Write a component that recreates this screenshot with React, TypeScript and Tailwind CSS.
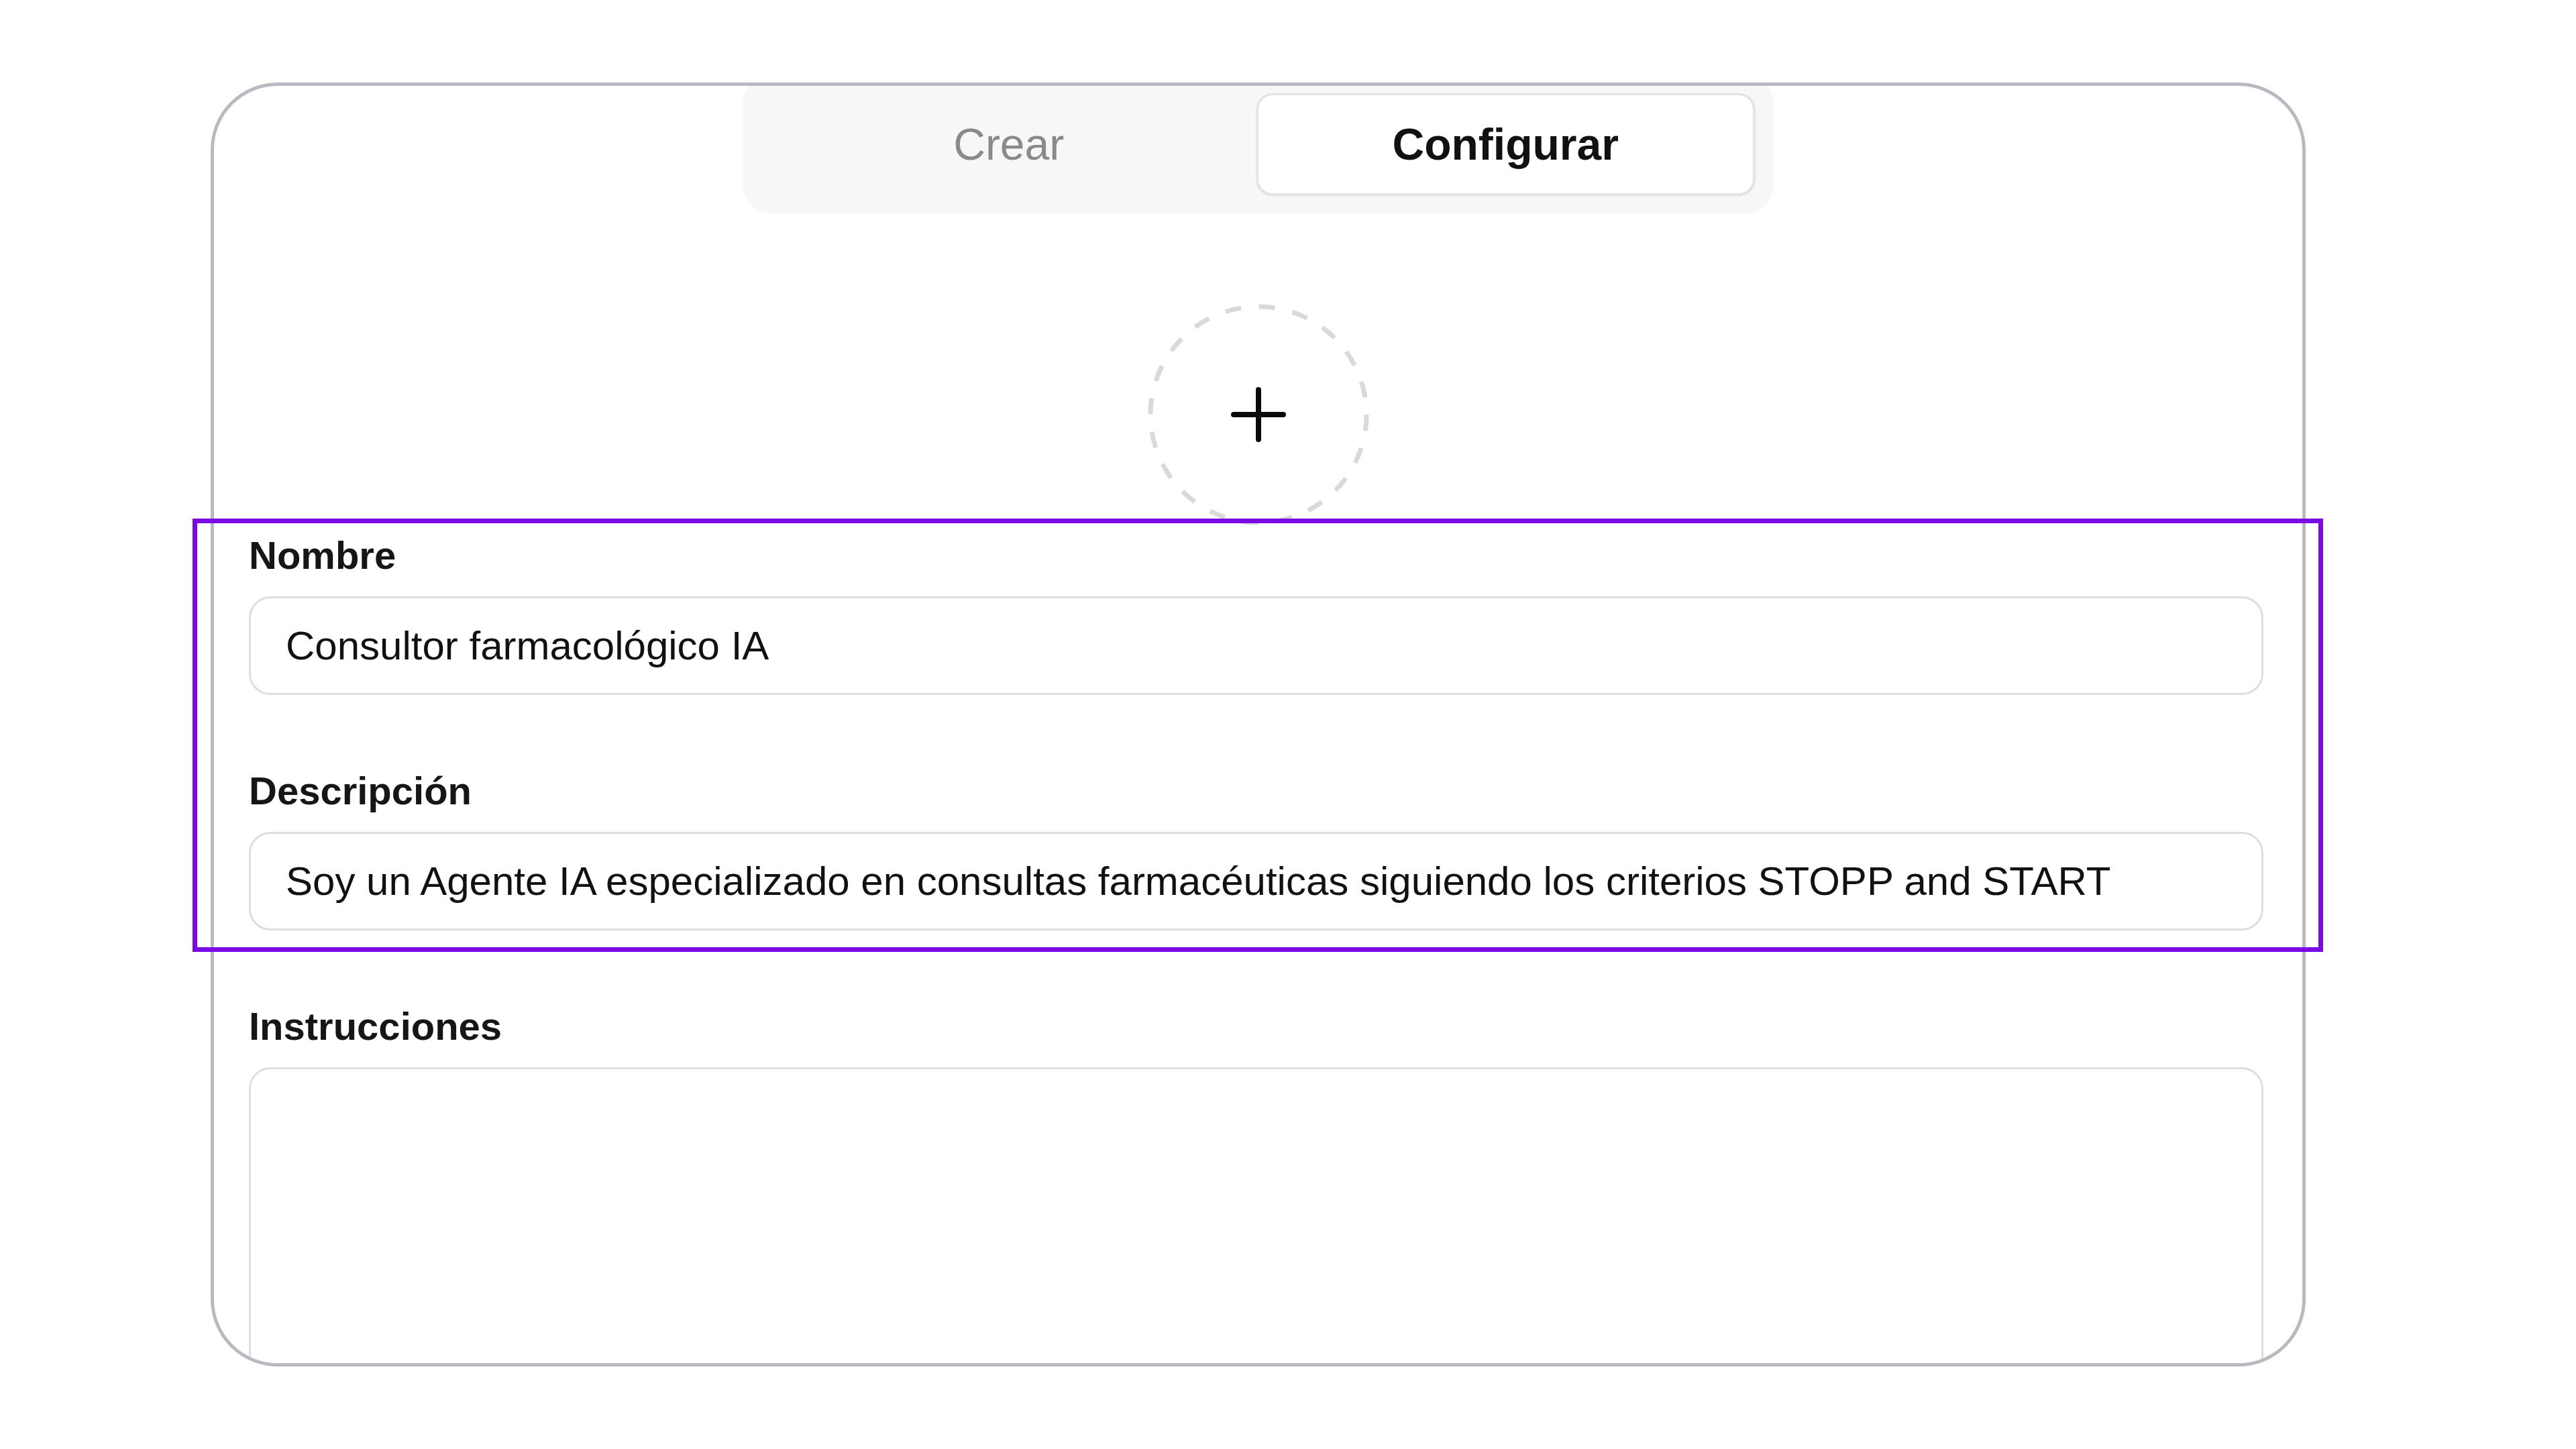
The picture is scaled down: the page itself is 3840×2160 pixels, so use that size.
import { useState } from 'react'

type Tab = 'crear' | 'configurar'

const FONT = { fontFamily: '"Liberation Sans", Arial, sans-serif' }

function DashedAvatar() {
  return (
    <button className="mx-auto mt-[135px] block h-[330px] w-[330px] shrink-0" aria-label="Añadir imagen">
      <svg width="330" height="330" viewBox="0 0 330 330">
        <circle cx="165" cy="165" r="161" fill="none" stroke="#d9d9d9" strokeWidth="7" strokeDasharray="24 26.6" />
        <path d="M128 165h74M165 128v74" stroke="#0a0a0a" strokeWidth="8" strokeLinecap="round" />
      </svg>
    </button>
  )
}

function Field({ label, value, className = '' }: { label: string; value: string; className?: string }) {
  return (
    <div className={className}>
      <div className="mb-[26px] text-[58px] leading-[70px] font-bold text-[#161616]">{label}</div>
      <div className="flex h-[147px] items-center rounded-[32px] border-[3px] border-[#dedede] bg-white pl-[52px] text-[60px] text-[#111111]">
        {value}
      </div>
    </div>
  )
}

export default function App() {
  const [tab, setTab] = useState<Tab>('configurar')

  return (
    <div className="relative h-[2160px] w-[3840px] overflow-hidden bg-white" style={FONT}>
      {/* Frame */}
      <div className="ml-[314px] mt-[123px] flex h-[1914px] w-[3123px] flex-col overflow-hidden rounded-[100px] border-[5px] border-[#b9b9c1] bg-white">
        {/* Tabs */}
        <div className="mx-auto -mt-[16px] flex w-[1535px] shrink-0 gap-0 rounded-[40px] bg-[#f7f7f7] p-[27px]">
          <button
            onClick={() => setTab('crear')}
            className={`flex h-[152px] flex-1 items-center justify-center rounded-[24px] text-[66px] ${
              tab === 'crear' ? 'border-[3px] border-[#e3e3e3] bg-white font-bold text-[#111111] shadow-sm' : 'font-medium text-[#8a8a8a]'
            }`}
          >
            Crear
          </button>
          <button
            onClick={() => setTab('configurar')}
            className={`flex h-[152px] flex-1 items-center justify-center rounded-[24px] text-[66px] ${
              tab === 'configurar' ? 'border-[3px] border-[#e3e3e3] bg-white font-bold text-[#111111] shadow-sm' : 'font-medium text-[#8a8a8a]'
            }`}
          >
            Configurar
          </button>
        </div>

        <DashedAvatar />

        {/* Form */}
        <div className="mt-[10px] flex flex-col gap-[108px] pl-[52px] pr-[58px]">
          <Field label="Nombre" value="Consultor farmacológico IA" />
          <Field
            label="Descripción"
            value="Soy un Agente IA especializado en consultas farmacéuticas siguiendo los criterios STOPP and START"
          />
          <div>
            <div className="mb-[26px] text-[58px] leading-[70px] font-bold text-[#161616]">Instrucciones</div>
            <div className="h-[600px] rounded-[32px] border-[3px] border-[#dedede] bg-white" />
          </div>
        </div>
      </div>

      {/* Highlight annotation */}
      <div className="pointer-events-none absolute left-[287px] top-[773px] h-[646px] w-[3176px] border-[7px] border-[#7a0ae6]" />
    </div>
  )
}
